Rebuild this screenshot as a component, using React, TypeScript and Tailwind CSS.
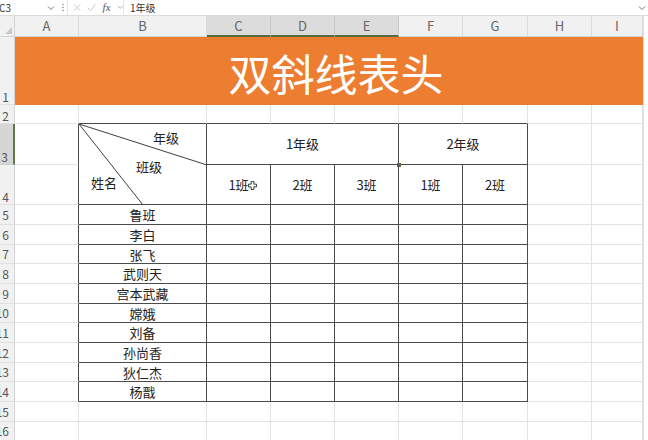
import React from "react";

const FONT = { fontFamily: '"Noto Sans CJK SC", "Noto Sans", sans-serif' };

const gl = "border-r border-b border-[#e2e2e2]";
const tb = "border-r border-b border-[#4b4b4b]";

const names = ["鲁班", "李白", "张飞", "武则天", "宫本武藏", "嫦娥", "刘备", "孙尚香", "狄仁杰", "杨戬"];

function RowHead({ n, sel = false, end = true }: { n: number; sel?: boolean; end?: boolean }) {
  return (
    <div
      className={`flex ${end ? "items-end pb-[1px]" : "items-center"} justify-end pr-[5px] overflow-hidden text-[12px] leading-none text-[#555] border-b ${
        sel ? "bg-[#d6d6d6] border-r-2 border-r-[#5f7a45] border-b-[#cfcfcf]" : "bg-[#f1f1f1] border-r border-r-[#d4d4d4] border-b-[#e0e0e0]"
      }`}
    >
      <span className="whitespace-nowrap">{n}</span>
    </div>
  );
}

function Strip() {
  return <div className="border-l border-[#e0e0e0] bg-white" />;
}

export default function App() {
  const colLetters = ["A", "B", "C", "D", "E", "F", "G", "H", "I"];
  const rowHeights = [20, 20, 19, 20, 20, 19, 20, 20, 19, 20, 20, 19];
  return (
    <div className="w-[648px] h-[440px] overflow-hidden bg-white relative" style={FONT}>
      {/* formula bar */}
      <div className="h-[16px] flex items-center border-b border-[#dcdcdc] bg-white text-[10px] text-[#333]">
        <div className="w-[60px] flex items-center justify-between pr-[4px] -ml-[1px]">
          <span className="leading-none">C3</span>
          <svg width="8" height="6" viewBox="0 0 8 6"><path d="M1 1.5 L4 4.5 L7 1.5" fill="none" stroke="#777" strokeWidth="1" /></svg>
        </div>
        <div className="w-[8px] flex justify-center">
          <svg width="2" height="9" viewBox="0 0 2 9"><circle cx="1" cy="1.5" r="0.8" fill="#888" /><circle cx="1" cy="4.5" r="0.8" fill="#888" /><circle cx="1" cy="7.5" r="0.8" fill="#888" /></svg>
        </div>
        <div className="flex items-center gap-[6px] pl-[5px] w-[56px] border-l border-[#e6e6e6] h-full">
          <svg width="9" height="9" viewBox="0 0 9 9"><path d="M1 1 L8 8 M8 1 L1 8" stroke="#c8c8c8" strokeWidth="1" /></svg>
          <svg width="10" height="9" viewBox="0 0 10 9"><path d="M1 5 L4 8 L9 1" fill="none" stroke="#c8c8c8" strokeWidth="1" /></svg>
          <span className="italic text-[11px] text-[#555] leading-none" style={{ fontFamily: '"Liberation Serif", serif' }}>fx</span>
          <svg width="7" height="5" viewBox="0 0 7 5"><path d="M1 1 L3.5 3.5 L6 1" fill="none" stroke="#999" strokeWidth="0.9" /></svg>
        </div>
        <div className="flex-1 flex items-center justify-between h-full border-l border-[#e6e6e6] pl-[6px] pr-[2px]">
          <span className="leading-none text-[10px]">1年级</span>
          <svg width="8" height="6" viewBox="0 0 8 6"><path d="M1 1.5 L4 4.5 L7 1.5" fill="none" stroke="#777" strokeWidth="1" /></svg>
        </div>
      </div>

      {/* sheet grid */}
      <div
        className="grid grid-cols-[15px_64px_128px_64px_64px_64px_64px_65px_64px_51px_5px]"
        style={{ gridTemplateRows: `21px 68px 19px 41px 40px ${rowHeights.map((h) => h + "px").join(" ")}` }}
      >
        {/* column headers */}
        <div className="bg-[#f1f1f1] border-r border-b border-[#d4d4d4] relative">
          <svg className="absolute right-[2px] bottom-[2px]" width="7" height="7" viewBox="0 0 7 7"><path d="M7 0 L7 7 L0 7 Z" fill="#c9c9c9" /></svg>
        </div>
        {colLetters.map((c) => {
          const sel = c === "C" || c === "D" || c === "E";
          return (
            <div
              key={c}
              className={`flex items-center justify-center text-[13px] text-[#666] border-r ${
                sel ? "bg-[#dcdcdc] border-r-[#c8c8c8] border-b-2 border-b-[#586b3c]" : "bg-[#f1f1f1] border-r-[#dadada] border-b border-b-[#d4d4d4]"
              }`}
            >
              {c}
            </div>
          );
        })}
        <Strip />

        {/* row 1: title */}
        <RowHead n={1} />
        <div className="col-span-9 bg-[#ed7d31] flex items-center justify-center pl-[14px]">
          <span className="text-white text-[43px] leading-none mt-[3px]">双斜线表头</span>
        </div>
        <Strip />

        {/* row 2 */}
        <RowHead n={2} />
        <div className={gl} />
        {[0, 1, 2, 3, 4, 5].map((i) => (
          <div key={i} className="border-r border-r-[#e2e2e2] border-b border-b-[#4b4b4b]" />
        ))}
        <div className={gl} />
        <div className={gl} />
        <Strip />

        {/* row 3 */}
        <RowHead n={3} sel />
        <div className="border-r border-r-[#4b4b4b] border-b border-b-[#e2e2e2]" />
        <div className={`${tb} row-span-2 relative`}>
          <svg className="absolute left-0 top-0" width="128" height="81" viewBox="0 0 128 81">
            <line x1="0" y1="0" x2="128" y2="41" stroke="#3f3f3f" strokeWidth="1" />
            <line x1="0" y1="0" x2="64" y2="81" stroke="#3f3f3f" strokeWidth="1" />
          </svg>
          <span className="absolute left-[74px] top-[7px] text-[13px] leading-none text-[#222] whitespace-nowrap">年级</span>
          <span className="absolute left-[57px] top-[36px] text-[13px] leading-none text-[#222] whitespace-nowrap">班级</span>
          <span className="absolute left-[12px] top-[52px] text-[13px] leading-none text-[#222] whitespace-nowrap">姓名</span>
        </div>
        <div className={`${tb} col-span-3 flex items-center justify-center text-[13px] text-[#222] relative`}>
          1年级
          <span className="absolute right-[-3px] bottom-[-3px] w-[4px] h-[4px] bg-[#5a6b4a]" />
        </div>
        <div className={`${tb} col-span-2 flex items-center justify-center text-[13px] text-[#222]`}>2年级</div>
        <div className={gl} />
        <div className={gl} />
        <Strip />

        {/* row 4 */}
        <RowHead n={4} />
        <div className="border-r border-r-[#4b4b4b] border-b border-b-[#e2e2e2]" />
        {["1班", "2班", "3班", "1班", "2班"].map((t, i) => (
          <div key={i} className={`${tb} flex items-center justify-center text-[13px] text-[#222] relative`}>
            {t}
            {i === 0 && (
              <svg className="absolute left-[41px] top-[16px]" width="9" height="9" viewBox="0 0 10 10">
                <path d="M3.5 0.5 H6.5 V3.5 H9.5 V6.5 H6.5 V9.5 H3.5 V6.5 H0.5 V3.5 H3.5 Z" fill="#fff" stroke="#222" strokeWidth="1" />
              </svg>
            )}
          </div>
        ))}
        <div className={gl} />
        <div className={gl} />
        <Strip />

        {/* rows 5-14 */}
        {names.map((nm, r) => (
          <React.Fragment key={nm}>
            <RowHead n={r + 5} end={false} />
            <div className="border-r border-r-[#4b4b4b] border-b border-b-[#e2e2e2]" />
            <div className={`${tb} flex items-center justify-center text-[13px] text-[#222] leading-none`}>{nm}</div>
            {[0, 1, 2, 3, 4].map((i) => (
              <div key={i} className={tb} />
            ))}
            <div className={gl} />
            <div className={gl} />
            <Strip />
          </React.Fragment>
        ))}

        {/* rows 15-16 */}
        {[15, 16].map((n) => (
          <React.Fragment key={n}>
            <RowHead n={n} end={false} />
            {[0, 1, 2, 3, 4, 5, 6, 7, 8].map((i) => (
              <div key={i} className={gl} />
            ))}
            <Strip />
          </React.Fragment>
        ))}
      </div>
    </div>
  );
}
